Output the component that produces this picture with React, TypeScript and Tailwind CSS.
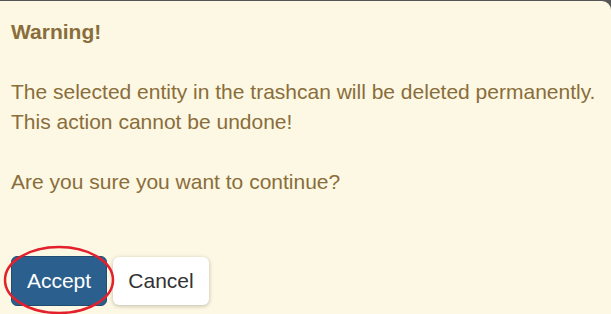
import React from "react";

export default function App() {
  return (
    <div className="w-[611px] h-[314px] bg-[#555555] overflow-hidden" style={{ fontFamily: '"Liberation Sans", Arial, sans-serif' }}>
      <div className="mt-px h-[313px] bg-[#fcf8e3] rounded-tr-[9px] pl-[11px] pt-[16px] text-[#8a6d3b] text-[21px] leading-[30px]">
        <div>
          <b>Warning!</b>
          <br />
          <br />
          The selected entity in the trashcan will be deleted permanently.
          <br />
          This action cannot be undone!
          <br />
          <br />
          Are you sure you want to continue?
        </div>
        <div className="mt-[59px] flex gap-[6px] items-start">
          <div className="relative">
            <button className="w-[96px] h-[50px] rounded-[6px] bg-[#2a5f8e] border border-[#204d74] text-white text-[21px] leading-[30px]">
              Accept
            </button>
            <svg className="absolute left-[-8px] top-[-11px] pointer-events-none" width="114" height="70" viewBox="0 0 114 70">
              <ellipse cx="56" cy="35" rx="54" ry="33" fill="none" stroke="#e3202b" strokeWidth="2.5" />
            </svg>
          </div>
          <button className="mt-px w-[96px] h-[48px] rounded-[6px] bg-white text-[#333333] text-[21px] leading-[30px] shadow-[0_1px_4px_rgba(0,0,0,0.25)]">
            Cancel
          </button>
        </div>
      </div>
    </div>
  );
}
